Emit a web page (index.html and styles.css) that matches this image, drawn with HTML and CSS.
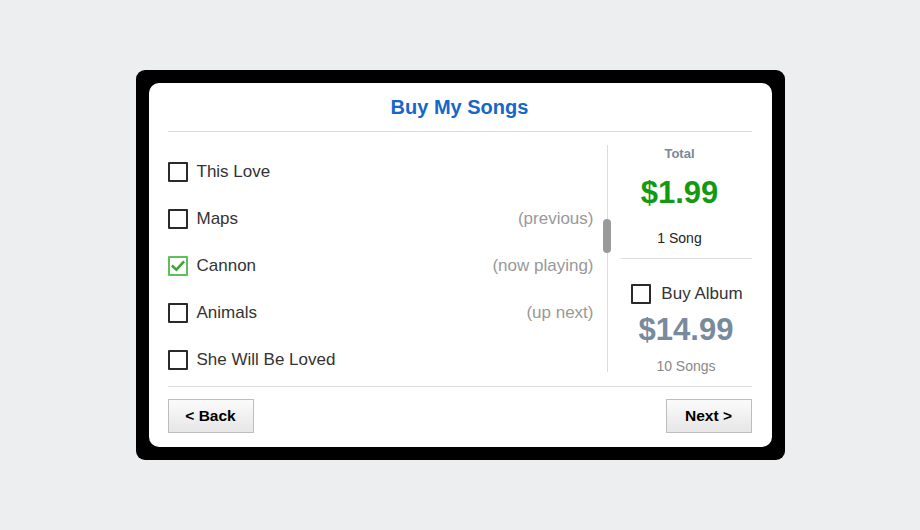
FILE: index.html
```html
<!DOCTYPE html>
<html lang="en">
<head>
<meta charset="utf-8">
<title>Buy My Songs</title>
<link rel="stylesheet" href="styles.css">
</head>
<body>
<div class="frame">
  <div class="panel">
    <header class="head"><h1 class="title">Buy My Songs</h1></header>
    <main class="body">
      <div class="songs">
        <ul class="list">
          <li class="row"><span class="box"></span><span class="name">This Love</span><span class="note"></span></li>
          <li class="row"><span class="box"></span><span class="name">Maps</span><span class="note">(previous)</span></li>
          <li class="row"><span class="box checked"><svg viewBox="0 0 20 20" width="16" height="16"><path d="M3.5 10.5 L8 14.5 L16.5 5.5" fill="none" stroke="#3aa63a" stroke-width="3.2" stroke-linecap="square"/></svg></span><span class="name">Cannon</span><span class="note">(now playing)</span></li>
          <li class="row"><span class="box"></span><span class="name">Animals</span><span class="note">(up next)</span></li>
          <li class="row"><span class="box"></span><span class="name">She Will Be Loved</span><span class="note"></span></li>
        </ul>
        <div class="thumb"></div>
      </div>
      <aside class="summary">
        <div class="total">
          <div class="total-label">Total</div>
          <div class="total-price">$1.99</div>
          <div class="total-count">1 Song</div>
        </div>
        <div class="album">
          <div class="album-row"><span class="box"></span><span class="album-name">Buy Album</span></div>
          <div class="album-price">$14.99</div>
          <div class="album-count">10 Songs</div>
        </div>
      </aside>
    </main>
    <footer class="foot">
      <button class="btn">&lt; Back</button>
      <button class="btn btn-next">Next &gt;</button>
    </footer>
  </div>
</div>
</body>
</html>
```
FILE: styles.css
```css
* { box-sizing: border-box; }
html, body { margin: 0; padding: 0; }
body {
  background: #eceeef;
  font-family: "Liberation Sans", Arial, sans-serif;
  width: 920px;
  height: 530px;
  padding-top: 70px;
}
.frame {
  width: 649px;
  height: 390px;
  margin: 0 auto;
  background: #000;
  border-radius: 9px;
  padding: 13px;
}
.panel {
  background: #fff;
  border-radius: 10px;
  height: 364px;
  padding: 0 20px 0 19px;
  display: flex;
  flex-direction: column;
}
.head {
  height: 49px;
  flex: none;
  border-bottom: 1px solid #dcdcdc;
  display: flex;
  justify-content: center;
  align-items: center;
}
.title {
  margin: 0;
  font-size: 20px;
  font-weight: bold;
  color: #1766c9;
  line-height: 24px;
}
.body {
  display: flex;
  flex: none;
  padding: 13px 0 14px;
  height: 255px;
  border-bottom: 1px solid #dcdcdc;
}
.songs {
  position: relative;
  width: 440px;
  flex: none;
  height: 227px;
  border-right: 1px solid #dcdcdc;
}
.list {
  list-style: none;
  margin: 0;
  padding: 3px 13px 0 0;
  height: 227px;
  overflow: hidden;
}
.row {
  height: 47px;
  display: flex;
  align-items: center;
  font-size: 17px;
  color: #333;
}
.box {
  width: 20px;
  height: 20px;
  border: 2px solid #2a2a2a;
  border-radius: 1px;
  flex: none;
  display: flex;
  align-items: center;
  justify-content: center;
}
.box.checked { border-color: #5cc05c; }
.name { margin-left: 9px; flex: 1; }
.note { color: #999; }
.thumb {
  position: absolute;
  left: 435px;
  top: 74px;
  width: 8px;
  height: 34px;
  background: #9a9a9a;
  border-radius: 4px;
}
.summary {
  flex: 1;
  padding-left: 13px;
  display: flex;
  flex-direction: column;
}
.total {
  flex: none;
  padding-right: 13px;
  text-align: center;
  border-bottom: 1px solid #dcdcdc;
  height: 114px;
}
.total-label {
  font-size: 13px;
  font-weight: bold;
  color: #7a8899;
  line-height: 16px;
  padding-top: 1px;
}
.total-price {
  margin-top: 13px;
  font-size: 31px;
  font-weight: bold;
  color: #129a12;
  line-height: 36px;
}
.total-count {
  margin-top: 18px;
  font-size: 14px;
  color: #222;
  line-height: 18px;
}
.album {
  flex: none;
  text-align: center;
  padding-top: 25px;
}
.album-row {
  display: flex;
  align-items: center;
  justify-content: center;
  height: 20px;
  font-size: 17px;
  color: #333;
  padding-left: 2px;
}
.album-name { margin-left: 10px; }
.album-price {
  margin-top: 8px;
  font-size: 31px;
  font-weight: bold;
  color: #788a9e;
  line-height: 36px;
}
.album-count {
  margin-top: 9px;
  font-size: 14px;
  color: #888;
  line-height: 18px;
}
.foot {
  display: flex;
  justify-content: space-between;
  padding-top: 12px;
}
.btn {
  height: 34px;
  width: 86px;
  font-family: "Liberation Sans", Arial, sans-serif;
  font-size: 15.5px;
  font-weight: bold;
  color: #000;
  border: 1px solid #bdbdbd;
  border-radius: 0;
  background: linear-gradient(#fbfbfb, #e6e6e6);
  padding: 0;
}
```
